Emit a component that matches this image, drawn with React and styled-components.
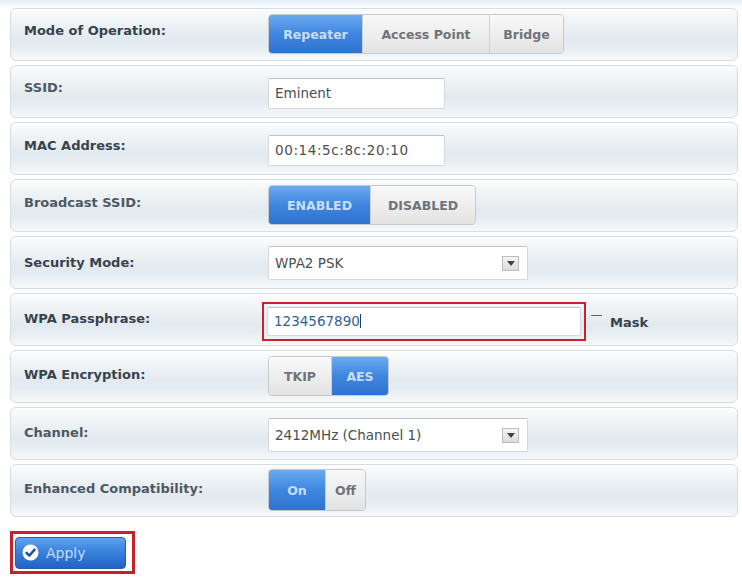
import React from 'react'
import styled, { createGlobalStyle } from 'styled-components'

const GlobalStyle = createGlobalStyle`
  html, body {
    margin: 0;
    padding: 0;
    background: #ffffff;
    font-family: 'DejaVu Sans', Verdana, sans-serif;
  }
`

const Page = styled.div`
  width: 742px;
  height: 579px;
  box-sizing: border-box;
  padding: 8px 4px 0 10px;
  background: linear-gradient(to bottom, #e3eff7 0px, #ffffff 10px);
  overflow: hidden;
`

const Form = styled.div`
  display: flex;
  flex-direction: column;
  gap: 4.5px;
`

const Row = styled.div`
  display: flex;
  align-items: center;
  height: 52.5px;
  box-sizing: border-box;
  border: 1px solid #d6dde2;
  border-radius: 6px;
  background: linear-gradient(to bottom, #fbfcfd 0%, #eef2f5 30%, #e2eaef 60%, #e6edf2 75%, #f6f8fa 100%);
  box-shadow: inset 0 1px 0 #ffffff;
`

const Label = styled.div`
  width: 257px;
  flex-shrink: 0;
  padding-left: 13px;
  box-sizing: border-box;
  font-size: 13px;
  font-weight: 700;
  color: ${p => (p.$light ? '#4d5862' : '#36434d')};
  margin-top: ${p => p.$raise || 0}px;
`

const Segmented = styled.div`
  display: flex;
  height: ${p => p.$h || 38}px;
  border: 1px solid #c5cacf;
  border-radius: 4px;
  overflow: hidden;
  background: linear-gradient(to bottom, #f6f6f6, #e4e4e4);
`

const Seg = styled.div`
  display: flex;
  align-items: center;
  justify-content: center;
  width: ${p => p.$w}px;
  font-size: 12.5px;
  font-weight: 700;
  color: ${p => (p.$on ? '#c9defa' : '#6f7377')};
  background: ${p =>
    p.$on
      ? 'linear-gradient(to bottom, #6aaaf0 0%, #3f86df 50%, #2f72cf 100%)'
      : 'linear-gradient(to bottom, #f8f8f8 0%, #ececec 60%, #e2e2e2 100%)'};
  border-left: ${p => (p.$first ? 'none' : '1px solid #cfd2d5')};
`

const TextBox = styled.div`
  display: flex;
  align-items: center;
  width: ${p => p.$w}px;
  height: ${p => p.$h || 31}px;
  box-sizing: border-box;
  padding-left: 6px;
  background: #ffffff;
  border: 1px solid #d4d8dc;
  border-top-color: #bfc4c9;
  border-radius: 2px;
  font-size: 13.5px;
  letter-spacing: ${p => p.$spread || 0}px;
  color: ${p => p.$color || '#4a4f55'};
  margin-top: ${p => p.$down || 0}px;
`

const SelectBox = styled(TextBox)`
  justify-content: space-between;
  padding-right: 8px;
`

const Arrow = styled.span`
  display: flex;
  align-items: center;
  justify-content: center;
  width: 17px;
  height: 15px;
  box-sizing: border-box;
  border: 1px solid #b9bdc1;
  background: linear-gradient(to bottom, #f4f4f4, #dcdcdc);
`

const Highlight = styled.div`
  padding: 3px;
  border: 2.5px solid #c8232c;
  margin-left: -6px;
  margin-top: 4px;
`

const Caret = styled.span`
  display: inline-block;
  width: 1px;
  height: 14px;
  background: #2a3a4a;
`

const MaskBox = styled.span`
  width: 11px;
  height: 1px;
  background: #5b6168;
  margin: -8px 8px 0 5px;
`

const MaskLabel = styled.span`
  font-size: 13px;
  font-weight: 700;
  color: #36434d;
  margin-top: 6px;
`

const Footer = styled.div`
  display: flex;
  padding-top: 14px;
`

const ApplyFrame = styled.div`
  border: 3px solid #c8202a;
  padding: 3px 6px 2px 2px;
`

const ApplyButton = styled.div`
  display: flex;
  align-items: center;
  gap: 7px;
  width: 111px;
  height: 32px;
  box-sizing: border-box;
  padding-left: 6px;
  border-radius: 4px;
  background: linear-gradient(to bottom, #5fa3ee 0%, #3a82dc 45%, #1f63c6 100%);
  border: 1px solid #2a5fa8;
  color: #c9dcf7;
  font-size: 14px;
`

const Check = () => (
  <svg width="17" height="17" viewBox="0 0 17 17">
    <circle cx="8.5" cy="8.5" r="8" fill="#ffffff" />
    <path d="M4.5 8.8 L7.3 11.6 L12.6 5.6" stroke="#1f4f9a" strokeWidth="2.4" fill="none" strokeLinecap="round" strokeLinejoin="round" />
  </svg>
)

const Down = () => (
  <svg width="8" height="5" viewBox="0 0 8 5">
    <path d="M0 0 L8 0 L4 5 Z" fill="#3d4247" />
  </svg>
)

const Group = ({ items, h }) => (
  <Segmented $h={h}>
    {items.map((it, i) => (
      <Seg key={it.label} $w={it.w} $on={it.on} $first={i === 0}>
        {it.label}
      </Seg>
    ))}
  </Segmented>
)

export default function App() {
  return (
    <Page>
      <GlobalStyle />
      <Form>
        <Row>
          <Label $raise={-8}>Mode of Operation:</Label>
          <Group
            items={[
              { label: 'Repeater', w: 93, on: true },
              { label: 'Access Point', w: 126 },
              { label: 'Bridge', w: 73 },
            ]}
          />
        </Row>
        <Row>
          <Label $light $raise={-8}>SSID:</Label>
          <TextBox $w={177} $down={4}>Eminent</TextBox>
        </Row>
        <Row>
          <Label $raise={-6}>MAC Address:</Label>
          <TextBox $w={177} $down={4} $spread={0.6}>00:14:5c:8c:20:10</TextBox>
        </Row>
        <Row>
          <Label $light $raise={-6}>Broadcast SSID:</Label>
          <Group
            items={[
              { label: 'ENABLED', w: 101, on: true },
              { label: 'DISABLED', w: 104 },
            ]}
          />
        </Row>
        <Row>
          <Label>Security Mode:</Label>
          <SelectBox $w={260} $h={34} $down={2}>
            WPA2 PSK
            <Arrow><Down /></Arrow>
          </SelectBox>
        </Row>
        <Row>
          <Label $raise={-2}>WPA Passphrase:</Label>
          <Highlight>
            <TextBox $w={314} $h={29} $color="#33628f">
              1234567890<Caret />
            </TextBox>
          </Highlight>
          <MaskBox />
          <MaskLabel>Mask</MaskLabel>
        </Row>
        <Row>
          <Label $raise={-4}>WPA Encryption:</Label>
          <Group
            h={38}
            items={[
              { label: 'TKIP', w: 62 },
              { label: 'AES', w: 56, on: true },
            ]}
          />
        </Row>
        <Row>
          <Label $light $raise={-2}>Channel:</Label>
          <SelectBox $w={260} $h={34} $down={4}>
            2412MHz (Channel 1)
            <Arrow><Down /></Arrow>
          </SelectBox>
        </Row>
        <Row>
          <Label $light $raise={-4}>Enhanced Compatibility:</Label>
          <Group
            h={40}
            items={[
              { label: 'On', w: 56, on: true },
              { label: 'Off', w: 39 },
            ]}
          />
        </Row>
      </Form>
      <Footer>
        <ApplyFrame>
          <ApplyButton>
            <Check />
            Apply
          </ApplyButton>
        </ApplyFrame>
      </Footer>
    </Page>
  )
}
